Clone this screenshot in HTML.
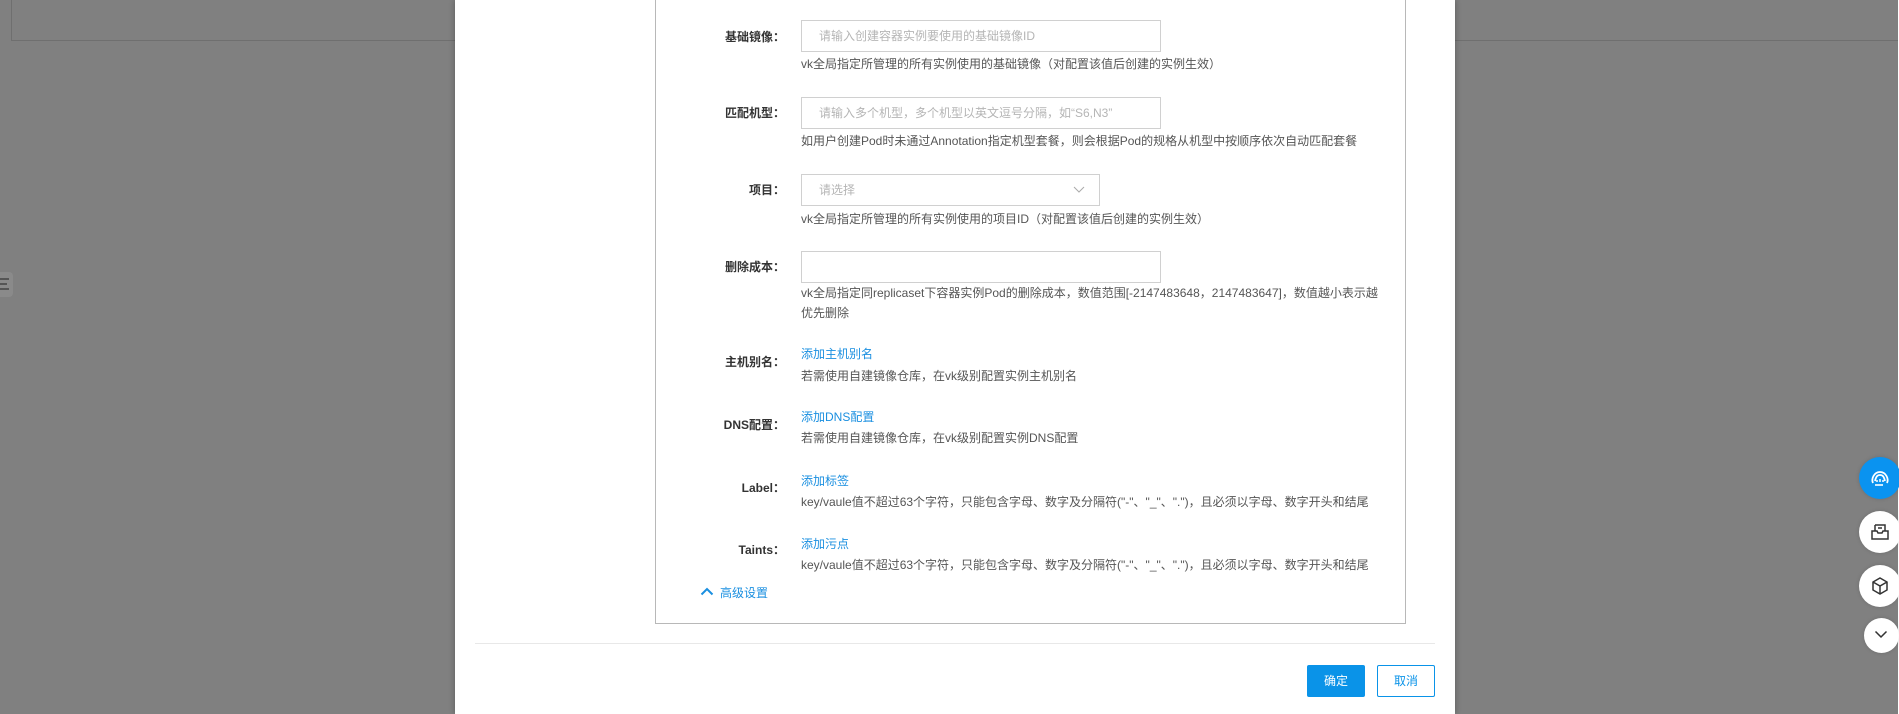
<!DOCTYPE html>
<html><head><meta charset="utf-8"><style>
*{margin:0;padding:0;box-sizing:border-box}
html,body{width:1899px;height:714px;overflow:hidden;background:#808080;font-family:"Liberation Sans","Noto Sans CJK SC",sans-serif;font-size:12px;position:relative}
.a{position:absolute}
.lbl{position:absolute;right:1114px;color:#333;font-weight:bold;white-space:nowrap;line-height:16px;transform:translateY(-8px)}
.help{position:absolute;left:801px;color:#555;white-space:nowrap;line-height:20px;transform:translateY(-10px)}
.link{position:absolute;left:801px;color:#1a8fe0;line-height:16px;transform:translateY(-8px)}
.inp{position:absolute;left:801px;width:360px;height:32px;border:1px solid #d0d0d0;background:#fff;color:#b5b5b5;padding-left:17px;line-height:30px;white-space:nowrap}
.fb{position:absolute;border-radius:50%;background:#fff;box-shadow:0 0 4px rgba(0,0,0,.15)}
</style></head><body>
<div class="a" style="left:11px;top:0;width:1888px;height:41px;border-left:1px solid #6f6f6f;border-bottom:1px solid #6f6f6f"></div>
<div class="a" style="left:0;top:272px;width:13px;height:25px;background:#8a8a8a;border-radius:0 4px 4px 0"></div>
<div class="a" style="left:0;top:278px;width:9px;height:2px;background:#555"></div>
<div class="a" style="left:0;top:283px;width:7px;height:2px;background:#555"></div>
<div class="a" style="left:0;top:288px;width:9px;height:2px;background:#555"></div>
<div class="a" style="left:1898px;top:0;width:1px;height:714px;background:#fff"></div>

<div class="a" style="left:455px;top:0;width:1000px;height:714px;background:#fff;box-shadow:0 0 6px rgba(0,0,0,.3)"></div>
<div class="a" style="left:655px;top:-2px;width:751px;height:626px;border:1px solid #b8b8b8"></div>

<div class="lbl" style="top:37px">基础镜像：</div>
<div class="inp" style="top:20px">请输入创建容器实例要使用的基础镜像ID</div>
<div class="help" style="top:64px">vk全局指定所管理的所有实例使用的基础镜像（对配置该值后创建的实例生效）</div>

<div class="lbl" style="top:113px">匹配机型：</div>
<div class="inp" style="top:97px">请输入多个机型，多个机型以英文逗号分隔，如“S6,N3”</div>
<div class="help" style="top:141px">如用户创建Pod时未通过Annotation指定机型套餐，则会根据Pod的规格从机型中按顺序依次自动匹配套餐</div>

<div class="lbl" style="top:190px">项目：</div>
<div class="inp" style="top:174px;width:299px">请选择<svg style="position:absolute;right:14px;top:11px" width="12" height="8" viewBox="0 0 12 8"><path d="M1 1l5 5 5-5" fill="none" stroke="#aaa" stroke-width="1"/></svg></div>
<div class="help" style="top:219px">vk全局指定所管理的所有实例使用的项目ID（对配置该值后创建的实例生效）</div>

<div class="lbl" style="top:267px">删除成本：</div>
<div class="inp" style="top:251px"></div>
<div class="help" style="top:293px">vk全局指定同replicaset下容器实例Pod的删除成本，数值范围[-2147483648，2147483647]，数值越小表示越</div>
<div class="help" style="top:313px">优先删除</div>

<div class="lbl" style="top:362px">主机别名：</div>
<div class="link" style="top:354px">添加主机别名</div>
<div class="help" style="top:376px">若需使用自建镜像仓库，在vk级别配置实例主机别名</div>

<div class="lbl" style="top:425px">DNS配置：</div>
<div class="link" style="top:417px">添加DNS配置</div>
<div class="help" style="top:438px">若需使用自建镜像仓库，在vk级别配置实例DNS配置</div>

<div class="lbl" style="top:488px">Label：</div>
<div class="link" style="top:481px">添加标签</div>
<div class="help" style="top:502px">key/vaule值不超过63个字符，只能包含字母、数字及分隔符("-"、"_"、".")，且必须以字母、数字开头和结尾</div>

<div class="lbl" style="top:550px">Taints：</div>
<div class="link" style="top:544px">添加污点</div>
<div class="help" style="top:565px">key/vaule值不超过63个字符，只能包含字母、数字及分隔符("-"、"_"、".")，且必须以字母、数字开头和结尾</div>

<svg class="a" style="left:700px;top:587px" width="14" height="9" viewBox="0 0 14 9"><path d="M1.5 7.5l5.5-5.5 5.5 5.5" fill="none" stroke="#1a8fe0" stroke-width="2"/></svg>
<div class="link" style="left:720px;top:593px">高级设置</div>

<div class="a" style="left:475px;top:643px;width:960px;height:1px;background:#e8e8e8"></div>
<div class="a" style="left:1307px;top:665px;width:58px;height:32px;background:#0a93e8;border-radius:2px;color:#fff;text-align:center;line-height:32px">确定</div>
<div class="a" style="left:1377px;top:665px;width:58px;height:32px;border:1px solid #0a93e8;border-radius:2px;color:#0a93e8;text-align:center;line-height:30px;background:#fff">取消</div>

<div class="fb" style="left:1859px;top:457px;width:42px;height:42px;background:#0a93f0"></div>
<svg class="a" style="left:1868px;top:466px" width="24" height="24" viewBox="0 0 24 24"><path d="M5 17c-2-4 1-11 7-11s9 7 7 11M7 15c1-4 2-6 5-6s4 2 5 6" fill="none" stroke="#fff" stroke-width="1.8"/><path d="M9 14v2M15 14v2M12 13v3" stroke="#fff" stroke-width="1.5"/><path d="M7 19h8" stroke="#fff" stroke-width="1.6"/></svg>
<div class="fb" style="left:1859px;top:511px;width:42px;height:42px"></div>
<svg class="a" style="left:1870px;top:522px" width="20" height="20" viewBox="0 0 20 20"><path d="M5 3h10v6M5 3v6M8 6h4" fill="none" stroke="#333" stroke-width="1.5"/><path d="M2 9h5l1 2h4l1-2h5v8H2z" fill="none" stroke="#333" stroke-width="1.5"/></svg>
<div class="fb" style="left:1859px;top:565px;width:42px;height:42px"></div>
<svg class="a" style="left:1870px;top:576px" width="20" height="20" viewBox="0 0 20 20"><path d="M10 2l7 4v8l-7 4-7-4V6zM3 6l7 4 7-4M10 10v8" fill="none" stroke="#333" stroke-width="1.5"/></svg>
<div class="fb" style="left:1864px;top:618px;width:35px;height:35px"></div>
<svg class="a" style="left:1874px;top:630px" width="14" height="9" viewBox="0 0 14 9"><path d="M1.5 1.5l5.5 5.5 5.5-5.5" fill="none" stroke="#333" stroke-width="1.5"/></svg>
</body></html>
